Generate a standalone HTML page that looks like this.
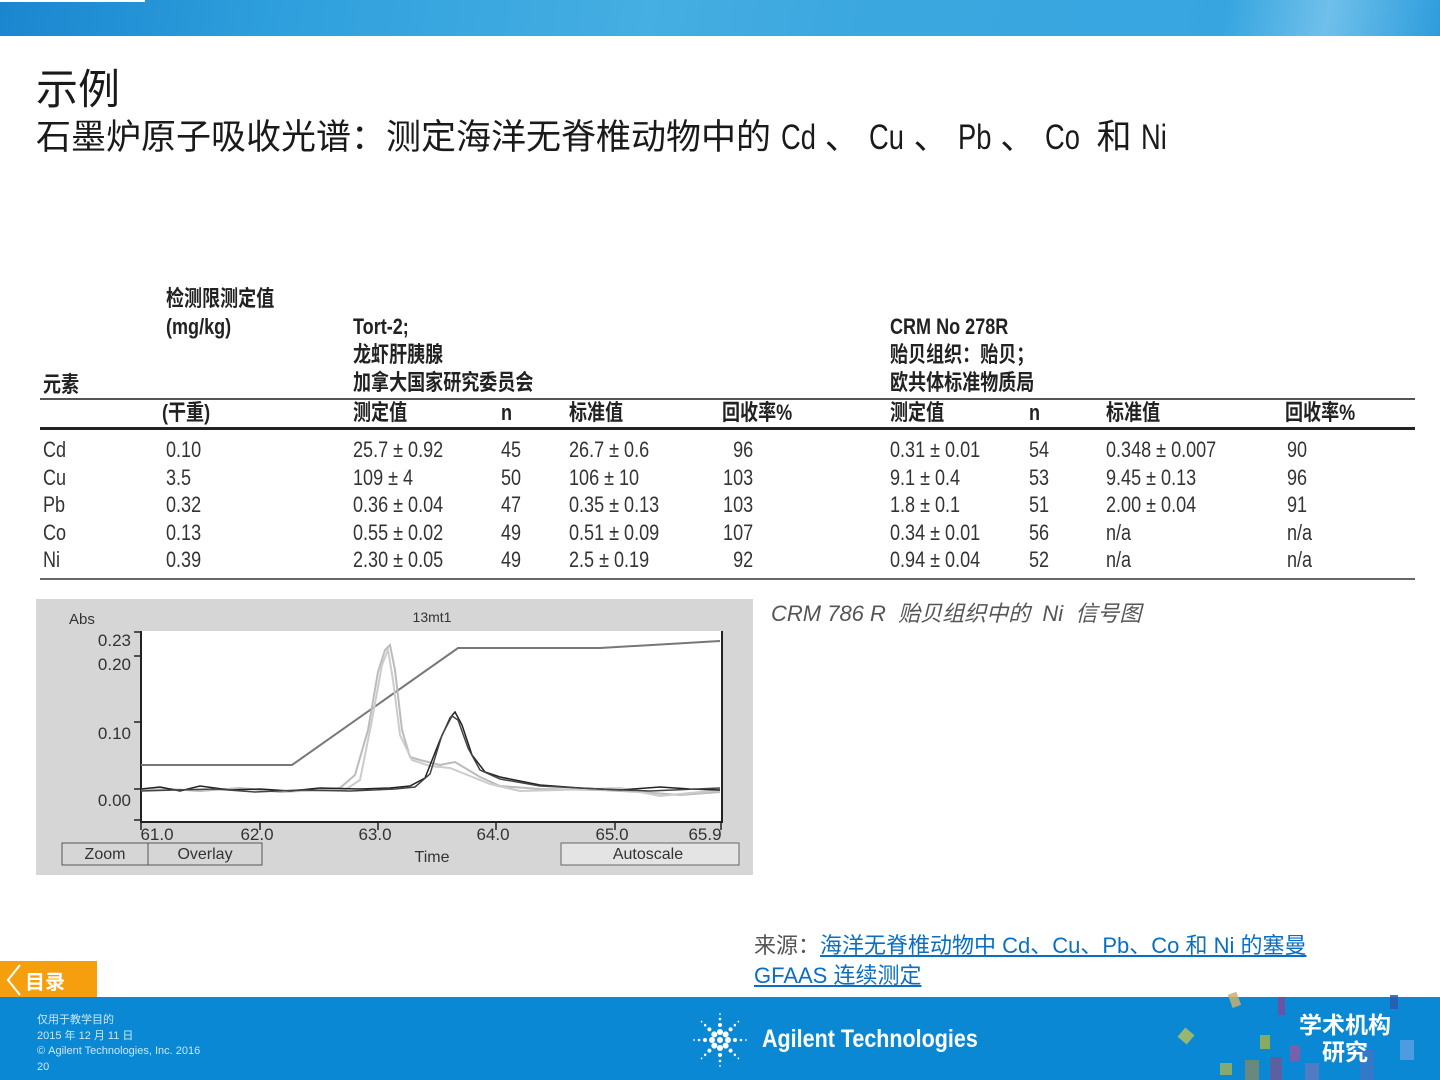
<!DOCTYPE html>
<html><head><meta charset="utf-8"><style>
*{margin:0;padding:0;box-sizing:border-box}
body{width:1440px;height:1080px;position:relative;background:#fff;overflow:hidden;font-family:"Liberation Sans","Noto Sans CJK SC",sans-serif;color:#222}
.a{position:absolute;white-space:nowrap}
.t{font-family:"Liberation Sans","Noto Sans CJK SC",sans-serif;font-size:22px;color:#333;transform:scaleX(0.82);transform-origin:left center;line-height:24px}
.b{font-weight:bold;color:#222}
.hl{position:absolute;left:40px;width:1375px;background:#555}
.n{display:inline-block;transform:scaleX(0.78);transform-origin:left center}
</style></head><body>
<div class="a" style="left:0;top:0;width:1440px;height:36px;background:linear-gradient(100deg,#1a86cf 0%,#2fa0dd 20%,#45aee2 45%,#3ba7df 60%,#37a6e0 85%,#6fc0ea 92%,#2d9cdc 100%)"></div>
<div class="a" style="left:0;top:0;width:145px;height:2px;background:#fff"></div>
<div class="a" style="left:36px;top:66px;font-size:42px;line-height:48px;color:#1a1a1a">示例</div>
<div class="a" style="left:36px;top:118px;font-size:35px;line-height:40px;color:#1a1a1a">石墨炉原子吸收光谱：测定海洋无脊椎动物中的 <span class="n" style="width:44px">Cd</span>、 <span class="n" style="width:44px">Cu</span>、 <span class="n" style="width:42px">Pb</span>、 <span class="n" style="width:42px">Co</span> 和 <span class="n">Ni</span></div>

<div class="a t b" style="left:166px;top:287px">检测限测定值</div>
<div class="a t b" style="left:166px;top:315px">(mg/kg)</div>
<div class="a t b" style="left:353px;top:315px">Tort-2;</div>
<div class="a t b" style="left:353px;top:343px">龙虾肝胰腺</div>
<div class="a t b" style="left:353px;top:371px">加拿大国家研究委员会</div>
<div class="a t b" style="left:43px;top:373px">元素</div>
<div class="a t b" style="left:890px;top:315px">CRM No 278R</div>
<div class="a t b" style="left:890px;top:343px">贻贝组织：贻贝；</div>
<div class="a t b" style="left:890px;top:371px">欧共体标准物质局</div>
<div class="hl" style="top:398px;height:2px"></div>
<div class="a t b" style="left:162px;top:401px">(干重)</div>
<div class="a t b" style="left:353px;top:401px">测定值</div>
<div class="a t b" style="left:501px;top:401px">n</div>
<div class="a t b" style="left:569px;top:401px">标准值</div>
<div class="a t b" style="left:722px;top:401px">回收率%</div>
<div class="a t b" style="left:890px;top:401px">测定值</div>
<div class="a t b" style="left:1029px;top:401px">n</div>
<div class="a t b" style="left:1106px;top:401px">标准值</div>
<div class="a t b" style="left:1285px;top:401px">回收率%</div>
<div class="hl" style="top:427px;height:3px;background:#222"></div>

<div class="a t" style="left:43px;top:436px;line-height:27.5px">Cd<br>Cu<br>Pb<br>Co<br>Ni</div>
<div class="a t" style="left:166px;top:436px;line-height:27.5px">0.10<br>3.5<br>0.32<br>0.13<br>0.39</div>
<div class="a t" style="left:353px;top:436px;line-height:27.5px">25.7 ± 0.92<br>109 ± 4<br>0.36 ± 0.04<br>0.55 ± 0.02<br>2.30 ± 0.05</div>
<div class="a t" style="left:501px;top:436px;line-height:27.5px">45<br>50<br>47<br>49<br>49</div>
<div class="a t" style="left:569px;top:436px;line-height:27.5px">26.7 ± 0.6<br>106 ± 10<br>0.35 ± 0.13<br>0.51 ± 0.09<br>2.5 ± 0.19</div>
<div class="a t" style="left:722px;top:436px;line-height:27.5px;text-align:right;width:38px">96<br>103<br>103<br>107<br>92</div>
<div class="a t" style="left:890px;top:436px;line-height:27.5px">0.31 ± 0.01<br>9.1 ± 0.4<br>1.8 ± 0.1<br>0.34 ± 0.01<br>0.94 ± 0.04</div>
<div class="a t" style="left:1029px;top:436px;line-height:27.5px">54<br>53<br>51<br>56<br>52</div>
<div class="a t" style="left:1106px;top:436px;line-height:27.5px">0.348 ± 0.007<br>9.45 ± 0.13<br>2.00 ± 0.04<br>n/a<br>n/a</div>
<div class="a t" style="left:1287px;top:436px;line-height:27.5px">90<br>96<br>91<br>n/a<br>n/a</div>
<div class="hl" style="top:578px;height:2px;background:#666"></div>

<svg class="a" style="left:36px;top:599px" width="717" height="276" viewBox="36 599 717 276" font-family="Liberation Sans,sans-serif">
<rect x="36" y="599" width="717" height="276" fill="#d6d6d6"/>
<rect x="141" y="631" width="581" height="191" fill="#fff"/>
<path d="M141 631V822H722V631" fill="none" stroke="#222" stroke-width="2"/>
<g stroke="#222" stroke-width="1.5"><path d="M134 632H141M134 656H141M134 722H141M134 789H141M134 820H141"/><path d="M141 822V830M260 822V830M378 822V830M496 822V830M615 822V830M721 822V830"/></g>
<g font-size="17" fill="#333" text-anchor="end"><text x="131" y="646">0.23</text><text x="131" y="670">0.20</text><text x="131" y="739">0.10</text><text x="131" y="806">0.00</text></g>
<g font-size="17" fill="#333" text-anchor="middle"><text x="157" y="840">61.0</text><text x="257" y="840">62.0</text><text x="375" y="840">63.0</text><text x="493" y="840">64.0</text><text x="612" y="840">65.0</text><text x="705" y="840">65.9</text><text x="432" y="862" font-size="16">Time</text><text x="432" y="622" font-size="14">13mt1</text></g>
<text x="69" y="624" font-size="15" fill="#333">Abs</text>
<polyline points="141,765 292,765 458,648 600,648 720,641" fill="none" stroke="#777" stroke-width="2"/>
<polyline points="141,790 170,789 200,791 240,788 280,792 320,790 340,788 355,775 368,730 378,672 385,650 390,645 395,670 402,730 410,757 420,760 440,765 455,762 465,768 480,777 500,786 540,789 600,790 640,792 680,795 720,792" fill="none" stroke="#bbb" stroke-width="2"/>
<polyline points="300,791 345,790 360,780 372,720 382,665 388,650 393,680 400,735 412,760 430,766 450,768 470,776 490,784 520,791 560,790 620,788 660,796 720,790" fill="none" stroke="#ccc" stroke-width="2"/>
<polyline points="141,789 160,787 180,791 200,786 230,790 260,789 290,791 320,788 360,789 390,788 410,786 425,778 440,740 450,718 455,712 462,725 472,755 485,772 500,777 540,785 580,788 620,790 660,787 690,789 720,790" fill="none" stroke="#222" stroke-width="1.5"/>
<polyline points="141,791 175,790 215,789 255,792 300,790 350,791 395,789 415,787 430,774 442,735 452,716 458,720 468,748 480,770 500,779 540,786 600,789 650,791 720,788" fill="none" stroke="#444" stroke-width="1.5"/>
<rect x="62" y="843" width="86" height="22" fill="#d6d6d6" stroke="#555"/><rect x="148" y="843" width="114" height="22" fill="#d6d6d6" stroke="#555"/>
<rect x="561" y="843" width="178" height="22" fill="#e4e4e4" stroke="#666"/>
<g font-size="16" fill="#333" text-anchor="middle"><text x="105" y="859">Zoom</text><text x="205" y="859">Overlay</text><text x="648" y="859">Autoscale</text></g>
</svg>

<div class="a" style="left:771px;top:596px;font-size:22px;font-style:italic;color:#555">CRM 786 R &nbsp;贻贝组织中的 &nbsp;Ni &nbsp;信号图</div>
<div class="a" style="left:754px;top:931px;font-size:22px;line-height:30px;color:#555">来源：<span style="color:#0a6fc2;text-decoration:underline">海洋无脊椎动物中 Cd、Cu、Pb、Co 和 Ni 的塞曼 </span><br><span style="color:#0a6fc2;text-decoration:underline">GFAAS 连续测定</span></div>

<div class="a" style="left:0;top:961px;width:97px;height:36px;background:#f59f0f"></div>
<svg class="a" style="left:4px;top:963px" width="20" height="34"><path d="M16 2L4 17L16 32" fill="none" stroke="#fff" stroke-width="2"/></svg>
<div class="a" style="left:25px;top:966px;font-size:20px;font-weight:bold;color:#fff">目录</div>

<div class="a" style="left:0;top:997px;width:1440px;height:83px;background:#0a88d3"></div>
<div class="a" style="left:37px;top:1013px;font-size:11px;line-height:15.5px;color:#cde6f7">仅用于教学目的<br>2015 年 12 月 11 日<br>© Agilent Technologies, Inc. 2016<br>20</div>
<svg class="a" style="left:690px;top:1010px" width="60" height="60" viewBox="-30 -30 60 60" fill="#fff">
<circle r="3"/><g id="s"><circle cx="0" cy="-8" r="3"/><circle cx="0" cy="-15" r="2"/><circle cx="0" cy="-21" r="1.3"/><circle cx="0" cy="-26" r="0.9"/></g>
<use href="#s" transform="rotate(45)"/><use href="#s" transform="rotate(90)"/><use href="#s" transform="rotate(135)"/><use href="#s" transform="rotate(180)"/><use href="#s" transform="rotate(225)"/><use href="#s" transform="rotate(270)"/><use href="#s" transform="rotate(315)"/>
</svg>
<div class="a" style="left:762px;top:1025px;font-size:25px;font-weight:bold;color:#fff;transform:scaleX(0.86);transform-origin:left center">Agilent Technologies</div>
<svg class="a" style="left:1160px;top:985px" width="280" height="95">
<g opacity="0.85"><rect x="70" y="8" width="9" height="14" fill="#c8b070" transform="rotate(-20 74 15)"/><rect x="118" y="12" width="7" height="18" fill="#7a4aa0"/><rect x="20" y="45" width="12" height="12" fill="#b0c060" transform="rotate(40 26 51)"/><rect x="100" y="50" width="10" height="14" fill="#a0b050"/><rect x="130" y="60" width="10" height="16" fill="#8a5aa8"/><rect x="60" y="78" width="12" height="12" fill="#9ab060"/><rect x="85" y="75" width="14" height="20" fill="#7a8a70"/><rect x="110" y="72" width="12" height="23" fill="#6a5a98"/><rect x="145" y="78" width="14" height="17" fill="#5a7ac0"/><rect x="230" y="10" width="8" height="14" fill="#2a5ab0"/><rect x="240" y="55" width="14" height="20" fill="#5aa0e0"/><rect x="200" y="65" width="14" height="30" fill="#3a78c8"/></g>
</svg>
<div class="a" style="left:1296px;top:1012px;font-size:23px;font-weight:bold;color:#fff;line-height:27px;text-align:center;width:98px">学术机构<br>研究</div>
</body></html>
